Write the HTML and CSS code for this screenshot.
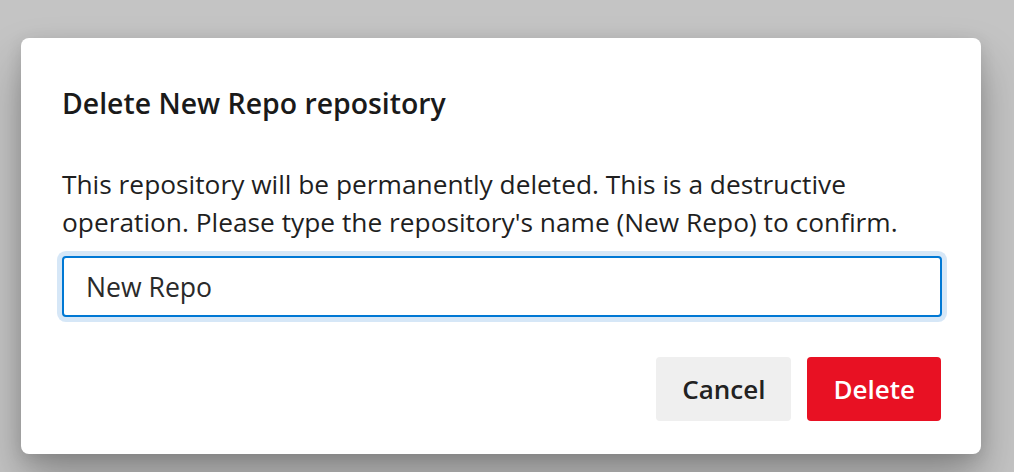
FILE: index.html
```html
<!DOCTYPE html>
<html lang="en">
<head>
<meta charset="utf-8">
<title>Delete repository</title>
<link rel="stylesheet" href="styles.css">
</head>
<body>
<div class="overlay">
  <div class="dialog" role="dialog" aria-labelledby="dlg-title">
    <h1 class="dialog-title" id="dlg-title">Delete New Repo repository</h1>
    <p class="dialog-text">This repository will be permanently deleted. This is a destructive operation. Please type the repository's name (New Repo) to confirm.</p>
    <input class="dialog-input" type="text" value="New Repo" aria-label="Repository name">
    <div class="dialog-actions">
      <button class="btn btn-secondary" type="button">Cancel</button>
      <button class="btn btn-danger" type="button">Delete</button>
    </div>
  </div>
</div>
</body>
</html>
```

FILE: styles.css
```css
* { box-sizing: border-box; }

html, body {
  margin: 0;
  height: 100%;
}

body {
  background: #c4c4c4;
  font-family: "Open Sans", "Noto Sans", "Liberation Sans", sans-serif;
  color: #1f1f1f;
  overflow: hidden;
}

.overlay {
  display: flex;
  align-items: flex-start;
  padding: 38px 0 0 21px;
}

.dialog {
  width: 960px;
  height: 416px;
  background: #ffffff;
  border-radius: 8px;
  box-shadow: 0 26px 46px rgba(0, 0, 0, 0.28), 0 4px 16px rgba(0, 0, 0, 0.12);
  padding: 47px 40px 33px 41px;
  display: flex;
  flex-direction: column;
}

.dialog-title {
  margin: 0;
  font-size: 28.4px;
  font-weight: 600;
  line-height: 36px;
  color: #1a1a1a;
}

.dialog-text {
  margin: 45px 0 0;
  font-size: 26.3px;
  line-height: 37.5px;
  color: #1f1f1f;
}

.dialog-input {
  margin-top: 15px;
  width: 880px;
  height: 61px;
  border: 2px solid #0078d4;
  border-radius: 4px;
  box-shadow: 0 0 0 5px #d6e7f7;
  padding: 0 22px;
  font-family: inherit;
  font-size: 26.6px;
  color: #2a2a2a;
  outline: none;
  background: #fff;
}

.dialog-actions {
  margin-top: 40px;
  display: flex;
  justify-content: flex-end;
  gap: 16px;
}

.btn {
  height: 64px;
  border: none;
  border-radius: 4px;
  padding: 0 26px;
  font-family: inherit;
  font-size: 26px;
  font-weight: 600;
  cursor: pointer;
}

.btn-secondary {
  background: #efefef;
  color: #222222;
}

.btn-danger {
  background: #e81123;
  color: #ffffff;
}
```
